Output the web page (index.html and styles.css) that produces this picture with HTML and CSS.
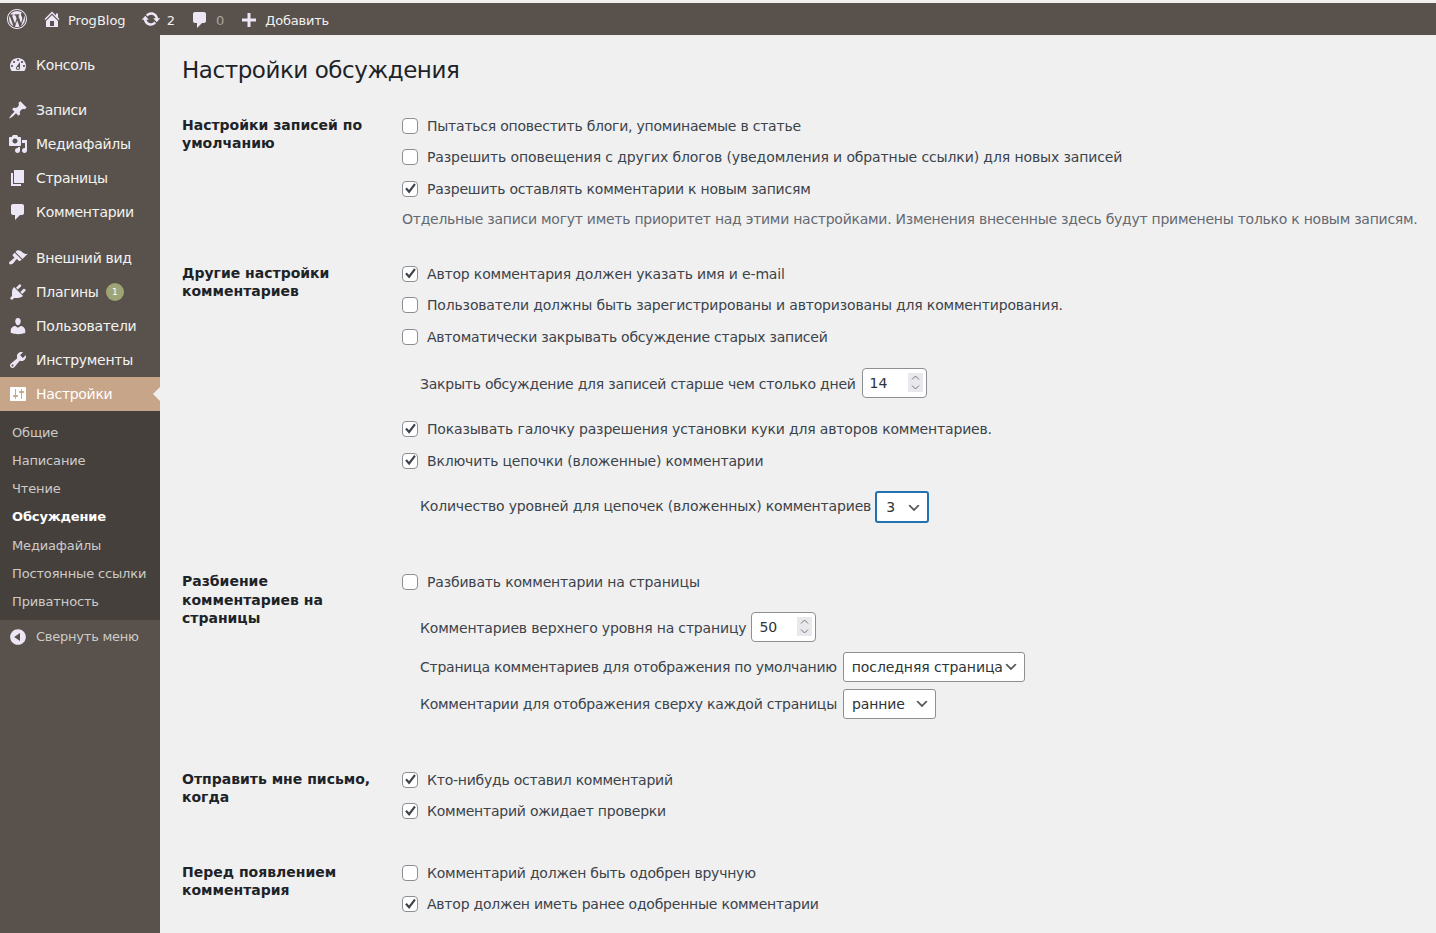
FILE: index.html
```html
<!DOCTYPE html>
<html lang="ru">

<head>
    <meta charset="UTF-8">
    <meta name="viewport" content="width=device-width, initial-scale=1.0">
    <title>Настройки обсуждения</title>
    <link rel="stylesheet" href="styles.css">
</head>

<body>
    <div class="adminbar">
        <svg class="bar-logo" viewBox="0 0 20 20"><path fill-rule="evenodd" d="M20 10c0-5.52-4.48-10-10-10S0 4.48 0 10s4.48 10 10 10 10-4.48 10-10zM10 1.01c4.97 0 8.99 4.02 8.99 8.99s-4.02 8.99-8.99 8.99S1.01 14.97 1.01 10 5.03 1.01 10 1.01zM8.01 14.82L4.96 6.61c.49-.03 1.05-.08 1.05-.08.43-.05.38-1.01-.06-.99 0 0-1.29.1-2.13.1-.15 0-.33 0-.52-.01 1.44-2.17 3.9-3.6 6.7-3.6 2.09 0 3.99.79 5.41 2.09-.6-.08-1.45.35-1.45 1.42 0 .66.38 1.22.79 1.88.31.54.5 1.22.5 2.21 0 1.34-1.27 4.48-1.27 4.48l-2.71-7.5c.48-.03.75-.16.75-.16.43-.05.38-1.1-.05-1.08 0 0-1.3.11-2.14.11-.78 0-2.11-.11-2.11-.11-.43-.02-.48 1.06-.05 1.08l.84.08 1.12 3.04zm6.02 2.15L16.64 10s.67-1.69.39-3.81c.63 1.14.94 2.42.94 3.81 0 2.96-1.56 5.58-3.94 6.97zM2.68 6.77L6.5 17.25c-2.67-1.3-4.47-4.08-4.47-7.25 0-1.16.2-2.23.65-3.23zm7.45 4.53l2.29 6.25c.02.05.05.09.07.14-.77.26-1.59.41-2.45.41-.72 0-1.43-.1-2.09-.29z"/></svg>
        <a class="bar-item bar-home"><svg class="bar-icon" viewBox="0 0 20 20"><path fill-rule="evenodd" d="M16 8.5l1.53 1.53-1.06 1.06L10 4.62l-6.47 6.47-1.06-1.06L10 2.5l4 4v-2h2v4zm-6-2.46l6 5.99V18H4v-5.97zM12 17v-5H8v5h4z"/></svg>ProgBlog</a>
        <a class="bar-item bar-updates"><svg class="bar-icon" viewBox="0 0 20 20"><path d="M10.2 3.28c3.53 0 6.43 2.61 6.92 6h2.08l-3.5 4-3.5-4h2.32c-.45-1.97-2.21-3.45-4.32-3.45-1.45 0-2.73.71-3.54 1.78L4.95 5.66C6.23 4.2 8.11 3.28 10.2 3.28zm-.4 13.44c-3.52 0-6.43-2.61-6.92-6H.8l3.5-4c1.17 1.33 2.33 2.67 3.5 4H5.48c.45 1.97 2.21 3.45 4.32 3.45 1.45 0 2.73-.71 3.54-1.78l1.71 1.95c-1.28 1.46-3.15 2.38-5.25 2.38z"/></svg>2</a>
        <a class="bar-item bar-comments"><svg class="bar-icon" viewBox="0 0 20 20"><path d="M5 2h9c1.1 0 2 .9 2 2v7c0 1.1-.9 2-2 2h-2l-5 5v-5H5c-1.1 0-2-.9-2-2V4c0-1.1.9-2 2-2z"/></svg><span class="zero">0</span></a>
        <a class="bar-item bar-new"><svg class="bar-icon" viewBox="0 0 20 20"><path d="M17 8.5v3h-5.5V17h-3v-5.5H3v-3h5.5V3h3v5.5z"/></svg>Добавить</a>
    </div>

    <div class="wrap">
        <nav class="sidebar">
            <ul class="menu">
                <li class="menu-item sep"><svg viewBox="0 0 20 20"><path fill-rule="evenodd" d="M3.76 16h12.48c1.1-1.37 1.76-3.11 1.76-5 0-4.42-3.58-8-8-8s-8 3.58-8 8c0 1.89.66 3.63 1.76 5zM10 4c.55 0 1 .45 1 1s-.45 1-1 1-1-.45-1-1 .45-1 1-1zM6 6c.55 0 1 .45 1 1s-.45 1-1 1-1-.45-1-1 .45-1 1-1zm8 0c.55 0 1 .45 1 1s-.45 1-1 1-1-.45-1-1 .45-1 1-1zm-5.37 5.55L12 7v6c0 1.1-.9 2-2 2s-2-.9-2-2c0-.57.24-1.08.63-1.45zM4 10c.55 0 1 .45 1 1s-.45 1-1 1-1-.45-1-1 .45-1 1-1zm12 0c.55 0 1 .45 1 1s-.45 1-1 1-1-.45-1-1 .45-1 1-1zm-5 3c0-.55-.45-1-1-1s-1 .45-1 1 .45 1 1 1 1-.45 1-1z"/></svg>Консоль</li>
                <li class="menu-item"><svg viewBox="0 0 20 20"><path d="M10.44 3.02l1.82-1.82 6.36 6.35-1.83 1.82c-1.05-.68-2.48-.57-3.41.36l-.75.75c-.92.93-1.04 2.35-.35 3.41l-1.83 1.82-2.41-2.41-2.8 2.79c-.42.42-3.38 2.71-3.8 2.29s1.86-3.39 2.28-3.81l2.79-2.79L4.1 9.36l1.83-1.82c1.05.69 2.48.57 3.4-.36l.75-.75c.93-.92 1.05-2.35.36-3.41z"/></svg>Записи</li>
                <li class="menu-item"><svg viewBox="0 0 20 20"><path fill-rule="evenodd" d="M13 11V4c0-.55-.45-1-1-1h-1.67L9 1H5L3.67 3H2c-.55 0-1 .45-1 1v7c0 .55.45 1 1 1h10c.55 0 1-.45 1-1zM7 4.5c1.38 0 2.5 1.12 2.5 2.5S8.38 9.5 7 9.5 4.5 8.38 4.5 7 5.62 4.5 7 4.5zM14 6h5v10.5c0 1.38-1.12 2.5-2.5 2.5S14 17.88 14 16.5s1.12-2.5 2.5-2.5c.17 0 .34.02.5.05V9h-3V6zm-4 8.05V13h2v3.5c0 1.38-1.12 2.5-2.5 2.5S7 17.88 7 16.5 8.12 14 9.5 14c.17 0 .34.02.5.05z"/></svg>Медиафайлы</li>
                <li class="menu-item"><svg viewBox="0 0 20 20"><path d="M6 15V2h10v13H6zm-1 1h8v2H3V5h2v11z"/></svg>Страницы</li>
                <li class="menu-item sep"><svg viewBox="0 0 20 20"><path d="M5 2h9c1.1 0 2 .9 2 2v7c0 1.1-.9 2-2 2h-2l-5 5v-5H5c-1.1 0-2-.9-2-2V4c0-1.1.9-2 2-2z"/></svg>Комментарии</li>
                <li class="menu-item"><svg viewBox="0 0 20 20"><path d="M14.48 11.06L7.41 3.99l1.5-1.5c.5-.56 2.3-.47 3.51.32 1.21.8 1.43 1.28 2.91 2.1 1.18.64 2.45 1.26 4.45.85zm-.71.71L6.7 4.7 4.93 6.47c-.39.39-.39 1.02 0 1.41l1.06 1.06c.39.39.39 1.03 0 1.42-.6.6-1.43 1.11-2.21 1.69-.35.26-.7.53-1.01.84C1.43 13.23.4 14.98 1.5 16.08s2.85.07 4.2-1.27c.31-.31.58-.66.84-1.01.58-.78 1.09-1.61 1.69-2.21.39-.39 1.03-.39 1.42 0l1.06 1.06c.39.39 1.02.39 1.41 0z"/></svg>Внешний вид</li>
                <li class="menu-item"><svg viewBox="0 0 20 20"><path d="M13.11 4.36L9.87 7.6 8 5.73l3.24-3.24c.35-.34 1.05-.2 1.56.32.52.51.66 1.21.31 1.55zm-8 1.77l.91-1.12 9.01 9.01-1.19.84c-.71.71-2.63 1.16-3.82 1.16H6.14L4.9 17.26c-.59.59-1.54.59-2.12 0-.59-.58-.59-1.53 0-2.12l1.24-1.24v-3.88c0-1.13.4-3.19 1.09-3.89zm7.26 3.97l3.24-3.24c.34-.35 1.04-.21 1.55.31.52.51.66 1.21.31 1.55l-3.24 3.25z"/></svg>Плагины<span class="count">1</span></li>
                <li class="menu-item"><svg viewBox="0 0 20 20"><path d="M10 9.25c-2.27 0-2.73-3.44-2.73-3.44C7 4.02 7.82 2 9.97 2c2.16 0 2.98 2.02 2.71 3.81 0 0-.41 3.44-2.68 3.44zm0 2.57L12.72 10c2.39 0 4.52 2.33 4.52 4.53v2.49s-3.65 1.13-7.24 1.13c-3.65 0-7.24-1.13-7.24-1.13v-2.49c0-2.25 1.94-4.48 4.47-4.48z"/></svg>Пользователи</li>
                <li class="menu-item"><svg viewBox="0 0 20 20"><path fill-rule="evenodd" d="M16.68 9.77c-1.34 1.34-3.3 1.67-4.95.99l-5.41 6.52c-.99.99-2.59.99-3.58 0s-.99-2.59 0-3.57l6.52-5.42c-.68-1.65-.35-3.61.99-4.95 1.28-1.28 3.12-1.62 4.72-1.06l-2.89 2.89 2.82 2.82 2.86-2.87c.53 1.58.18 3.39-1.08 4.65zM3.81 16.21c.4.39 1.04.39 1.43 0 .4-.4.4-1.04 0-1.43-.39-.4-1.03-.4-1.43 0-.39.39-.39 1.03 0 1.43z"/></svg>Инструменты</li>
                <li class="menu-item current"><svg viewBox="0 0 20 20"><path fill-rule="evenodd" d="M18 16V4c0-.55-.45-1-1-1H3c-.55 0-1 .45-1 1v12c0 .55.45 1 1 1h14c.55 0 1-.45 1-1zM8 11h1c.55 0 1 .45 1 1s-.45 1-1 1H8v1.5c0 .28-.22.5-.5.5s-.5-.22-.5-.5V13H6c-.55 0-1-.45-1-1s.45-1 1-1h1V5.5c0-.28.22-.5.5-.5s.5.22.5.5V11zm5-2h-1c-.55 0-1-.45-1-1s.45-1 1-1h1V5.5c0-.28.22-.5.5-.5s.5.22.5.5V7h1c.55 0 1 .45 1 1s-.45 1-1 1h-1v5.5c0 .28-.22.5-.5.5s-.5-.22-.5-.5V9z"/></svg>Настройки</li>
            </ul>
            <ul class="submenu">
                <li>Общие</li>
                <li>Написание</li>
                <li>Чтение</li>
                <li class="active">Обсуждение</li>
                <li>Медиафайлы</li>
                <li>Постоянные ссылки</li>
                <li>Приватность</li>
            </ul>
            <div class="collapse"><svg viewBox="0 0 20 20"><path fill-rule="evenodd" d="M10 2.16c4.33 0 7.84 3.51 7.84 7.84s-3.51 7.84-7.84 7.84S2.16 14.33 2.16 10 5.71 2.16 10 2.16zm2 11.72V6.12L6.18 9.97z"/></svg>Свернуть меню</div>
        </nav>

        <main class="content">
            <h1>Настройки обсуждения</h1>

            <section class="row row-posts">
                <h2>Настройки записей по умолчанию</h2>
                <div>
                    <label class="opt"><input type="checkbox">Пытаться оповестить блоги, упоминаемые в статье</label>
                    <label class="opt loose"><input type="checkbox">Разрешить оповещения с других блогов (уведомления и обратные ссылки) для новых записей</label>
                    <label class="opt"><input type="checkbox" checked>Разрешить оставлять комментарии к новым записям</label>
                    <p class="desc">Отдельные записи могут иметь приоритет над этими настройками. Изменения внесенные здесь будут применены только к новым записям.</p>
                </div>
            </section>

            <section class="row row-other">
                <h2>Другие настройки комментариев</h2>
                <div>
                    <label class="opt mid"><input type="checkbox" checked>Автор комментария должен указать имя и e-mail</label>
                    <label class="opt mid"><input type="checkbox">Пользователи должны быть зарегистрированы и авторизованы для комментирования.</label>
                    <label class="opt"><input type="checkbox">Автоматически закрывать обсуждение старых записей</label>
                    <div class="field field-close">Закрыть обсуждение для записей старше чем столько дней<input class="num" type="number" value="14"></div>
                    <label class="opt mid"><input type="checkbox" checked>Показывать галочку разрешения установки куки для авторов комментариев.</label>
                    <label class="opt mid"><input type="checkbox" checked>Включить цепочки (вложенные) комментарии</label>
                    <div class="field field-depth mid">Количество уровней для цепочек (вложенных) комментариев<select class="sel sel-depth"><option>3</option></select></div>
                </div>
            </section>

            <section class="row row-pages">
                <h2>Разбиение комментариев на страницы</h2>
                <div>
                    <label class="opt mid"><input type="checkbox">Разбивать комментарии на страницы</label>
                    <div class="field field-per mid">Комментариев верхнего уровня на страницу<input class="num" type="number" value="50"></div>
                    <div class="field field-default">Страница комментариев для отображения по умолчанию<select class="sel sel-last"><option>последняя страница</option></select></div>
                    <div class="field field-order">Комментарии для отображения сверху каждой страницы<select class="sel sel-order"><option>ранние</option></select></div>
                </div>
            </section>

            <section class="row row-mail">
                <h2>Отправить мне письмо, когда</h2>
                <div>
                    <label class="opt"><input type="checkbox" checked>Кто-нибудь оставил комментарий</label>
                    <label class="opt"><input type="checkbox" checked>Комментарий ожидает проверки</label>
                </div>
            </section>

            <section class="row row-before">
                <h2>Перед появлением комментария</h2>
                <div>
                    <label class="opt"><input type="checkbox">Комментарий должен быть одобрен вручную</label>
                    <label class="opt"><input type="checkbox" checked>Автор должен иметь ранее одобренные комментарии</label>
                </div>
            </section>
        </main>
    </div>
</body>

</html>
```

FILE: styles.css
```css
* {
    margin: 0;
    padding: 0;
    box-sizing: border-box;
}

html,
body {
    height: 100%;
    overflow: hidden;
}

body {
    background: #f0f0f1;
    color: #3c434a;
    font-family: "DejaVu Sans", sans-serif;
    font-size: 14px;
    padding-top: 3px;
}

ul {
    list-style: none;
}

/* top bar */
.adminbar {
    height: 32px;
    padding-top: 2px;
    background: #59524c;
    color: #f1f1f1;
    font-size: 13px;
    display: flex;
    align-items: center;
}

.adminbar svg {
    fill: #ece6f6;
}

.bar-logo {
    width: 20px;
    height: 20px;
    margin: -2px 0 0 7px;
}

.bar-item {
    display: flex;
    align-items: center;
    margin-left: 15px;
}

.bar-icon {
    width: 20px;
    height: 20px;
    margin-right: 6px;
}

.bar-home svg {
    margin-top: -2px;
}

.bar-updates svg {
    margin-top: -3px;
}

.bar-new {
    letter-spacing: -.2px;
}

.zero {
    opacity: .5;
}

/* side menu */
.wrap {
    display: flex;
    height: calc(100% - 32px);
}

.sidebar {
    width: 160px;
    flex: none;
    background: #59524c;
    padding-top: 12.5px;
}

.menu-item {
    height: 34.2px;
    display: flex;
    align-items: center;
    padding-left: 8px;
    color: #f3f2f1;
    letter-spacing: -.3px;
    position: relative;
}

.menu-item svg {
    width: 20px;
    height: 20px;
    margin-right: 8px;
    fill: #ece6f6;
    flex: none;
}

.sep {
    margin-bottom: 11px;
}

.count {
    width: 18px;
    height: 18px;
    border-radius: 50%;
    background: #9ea476;
    color: #fff;
    font-size: 9px;
    line-height: 18px;
    text-align: center;
    margin-left: 7px;
}

.current {
    background: #c7a589;
    color: #fff;
}

.current svg {
    fill: #fff;
}

.current::after {
    content: "";
    position: absolute;
    right: 0;
    top: 10px;
    border: 7px solid transparent;
    border-left-width: 0;
    border-right-color: #f0f0f1;
}

.submenu {
    background: #46403c;
    padding: 7.5px 0 4px;
    font-size: 13px;
    color: #cdcbc9;
    letter-spacing: -.15px;
}

.submenu li {
    height: 28.17px;
    line-height: 28px;
    padding-left: 12px;
}

.submenu .active {
    color: #fff;
    font-weight: 600;
}

.collapse {
    height: 34px;
    display: flex;
    align-items: center;
    padding-left: 8px;
    font-size: 13px;
    color: #cdcbc9;
    letter-spacing: -.23px;
}

.collapse svg {
    width: 20px;
    height: 20px;
    margin-right: 8px;
    fill: #ece6f6;
}

/* settings form */
.content {
    flex: 1;
    padding: 0 0 0 22px;
    min-width: 0;
}

h1 {
    font-size: 23px;
    font-weight: 400;
    line-height: 29px;
    letter-spacing: -.45px;
    color: #1d2327;
    padding-top: 21px;
    margin-bottom: 25px;
}

.row {
    display: grid;
    grid-template-columns: 220px 1fr;
}

h2 {
    font-size: 14px;
    font-weight: 600;
    line-height: 18.2px;
    color: #1d2327;
    padding: 6px 20px 0 0;
}

.opt {
    height: 31.5px;
    display: flex;
    align-items: center;
    white-space: nowrap;
    letter-spacing: -.23px;
}

.mid {
    letter-spacing: -.17px;
}

.loose {
    letter-spacing: -.116px;
}

.opt input {
    appearance: none;
    width: 16px;
    height: 16px;
    margin-right: 9px;
    border: 1px solid #8c8f94;
    border-radius: 4px;
    background: #fff;
    flex: none;
    position: relative;
}

.opt input:checked::before {
    content: "";
    position: absolute;
    left: 1px;
    top: 1px;
    width: 12px;
    height: 12px;
    background: #3c434a;
    clip-path: polygon(10% 52%, 23% 40%, 42% 60%, 85% 5%, 98% 17%, 43% 90%);
}

.desc {
    color: #646970;
    line-height: 29px;
    white-space: nowrap;
    letter-spacing: -.26px;
}

.field {
    display: flex;
    align-items: center;
    padding-left: 18px;
    white-space: nowrap;
    letter-spacing: -.24px;
}

.field-depth,
.field-per {
    letter-spacing: -.17px;
}

.num {
    width: 65px;
    height: 29.5px;
    margin: 0 0 2px 6px;
    padding: 0 3px 0 7px;
    border: 1px solid #8c8f94;
    border-radius: 4px;
    background: #fff;
    color: #2c3338;
    font: 14px "DejaVu Sans", sans-serif;
}

.num::-webkit-inner-spin-button {
    appearance: none;
    opacity: 1;
    width: 15px;
    height: 19px;
    background: #e9e9ed url('data:image/svg+xml,<svg xmlns="http://www.w3.org/2000/svg" width="15" height="19"><path d="M4 6.5l3.5-3.5 3.5 3.5M4 12.5l3.5 3.5 3.5-3.5" fill="none" stroke="%23777" stroke-width="1"/></svg>') no-repeat center;
}

.sel {
    appearance: none;
    height: 30px;
    margin-left: 6px;
    padding: 0 20px 0 8px;
    border: 1px solid #8c8f94;
    border-radius: 3px;
    color: #2c3338;
    font: 14px "DejaVu Sans", sans-serif;
    letter-spacing: -.1px;
    background: #fff url('data:image/svg+xml,<svg xmlns="http://www.w3.org/2000/svg" width="20" height="20" viewBox="0 0 20 20"><path d="M5 6l5 5 5-5 2 1-7 7-7-7z" fill="%23555"/></svg>') no-repeat right 5px top 55%;
    background-size: 16px 16px;
}

.sel-depth {
    width: 54px;
    height: 32px;
    margin: 2px 0 0 4px;
    border: 2px solid #2271b1;
    padding-left: 9px;
}

.sel-last {
    width: 182px;
}

.sel-order {
    width: 93px;
}

.field-close {
    margin-top: 15.5px;
    margin-bottom: 13.75px;
}

.field-depth {
    margin-top: 12.75px;
}

.field-per {
    margin-top: 14.5px;
}

.field-per .num {
    margin-left: 5px;
}

.field-default {
    margin-top: 8px;
}

.field-order {
    margin-top: 7px;
}

.row-pages h2 {
    padding-top: 6.4px;
}

.row-posts {
    height: 148px;
}

.row-other {
    height: 308px;
}

.row-pages {
    height: 198px;
}

.row-mail {
    height: 93px;
}
```
